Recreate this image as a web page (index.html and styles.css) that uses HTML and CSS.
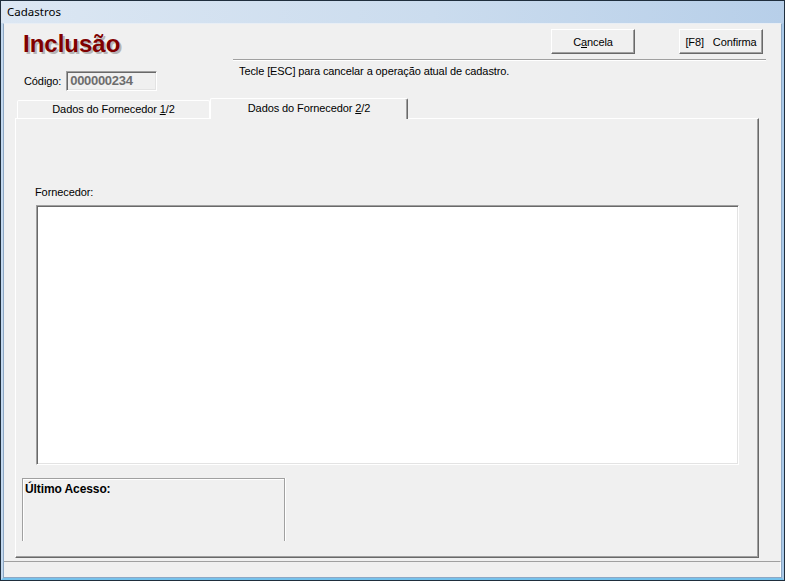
FILE: index.html
```html
<!DOCTYPE html>
<html lang="pt-BR">
<head>
<meta charset="utf-8">
<title>Cadastros</title>
<link rel="stylesheet" href="styles.css">
</head>
<body>
<div class="window">
  <div class="titlebar">Cadastros</div>
  <div class="frame">
    <div class="client">
      <div class="header">
        <div class="header-left">
          <div class="mode-title">Inclusão</div>
          <div class="code-row">
            <span class="label">Código:</span>
            <div class="code-input">000000234</div>
          </div>
        </div>
        <div class="header-right">
          <div class="buttons">
            <button class="btn">C<u>a</u>ncela</button>
            <button class="btn">[F8]   Confirma</button>
          </div>
          <div class="etched-line"></div>
          <div class="hint">Tecle [ESC] para cancelar a operação atual de cadastro.</div>
        </div>
      </div>
      <div class="tabs">
        <div class="tab tab-inactive">Dados do Fornecedor <u>1</u>/2</div>
        <div class="tab tab-active">Dados do Fornecedor <u>2</u>/2</div>
      </div>
      <div class="tab-panel">
        <div class="field-label">Fornecedor:</div>
        <div class="memo"></div>
        <div class="group">
          <div class="group-title">Último Acesso:</div>
        </div>
      </div>
      <div class="statusbar"></div>
    </div>
  </div>
</div>
</body>
</html>
```
FILE: styles.css
```css
* { box-sizing: border-box; }
html, body { margin: 0; padding: 0; background: #f0f0f0; }
body {
  font-family: "Liberation Sans", Arial, sans-serif;
  font-size: 11px;
  color: #000;
}
.window {
  width: 785px;
  height: 581px;
  border: 1px solid #1f2e3d;
  display: flex;
  flex-direction: column;
  background: #c9dcef;
}
.titlebar {
  height: 22px;
  line-height: 22px;
  padding-left: 6px;
  font-family: "Noto Sans", "Open Sans", sans-serif;
  font-size: 11.5px;
  color: #000;
  background: linear-gradient(to right, #dce7f3 0%, #cbdcee 55%, #b7cfe9 100%);
}
.frame {
  flex: 1;
  display: flex;
  border: 2px solid #c3d8ee;
  border-top: 0;
  border-right-color: #a9c9e8;
  border-bottom-color: #76c2ec;
}
.client {
  flex: 1;
  display: flex;
  flex-direction: column;
  background: #f0f0f0;
  border: 1px solid #8ea8c4;
  border-top-color: #e8eef5;
  letter-spacing: -0.1px;
}
.header {
  display: flex;
  height: 67px;
}
.header-left {
  width: 229px;
}
.mode-title {
  margin-top: 6px;
  margin-left: 19px;
  font-size: 24px;
  line-height: 28px;
  font-weight: bold;
  letter-spacing: 0;
  color: #800000;
  text-shadow: 2px 2px 0 #b5b5b5;
}
.code-row {
  margin-top: 13px;
  margin-left: 20px;
  display: flex;
  align-items: center;
  gap: 5px;
}
.code-input {
  width: 91px;
  height: 20px;
  border: 1px solid;
  border-color: #a0a0a0 #ffffff #ffffff #a0a0a0;
  box-shadow: inset 1px 1px 0 #696969, inset -1px -1px 0 #e3e3e3;
  padding-left: 3px;
  font-size: 13px;
  font-weight: bold;
  letter-spacing: -0.3px;
  line-height: 18px;
  color: #6d6d6d;
  background: #f0f0f0;
}
.header-right {
  flex: 1;
  padding-top: 5px;
}
.buttons {
  display: flex;
  justify-content: flex-end;
  gap: 44px;
  padding-right: 18px;
}
.btn {
  width: 84px;
  height: 25px;
  margin: 0;
  padding: 0;
  font-family: "Liberation Sans", Arial, sans-serif;
  font-size: 11px;
  letter-spacing: -0.1px;
  color: #000;
  background: #f0f0f0;
  border: 1px solid;
  border-color: #ffffff #696969 #696969 #ffffff;
  box-shadow: inset -1px -1px 0 #a0a0a0;
  white-space: pre;
}
.etched-line {
  margin-top: 5px;
  margin-right: 15px;
  height: 2px;
  border-top: 1px solid #a0a0a0;
  border-bottom: 1px solid #ffffff;
}
.hint {
  margin-top: 4px;
  padding-left: 6px;
  line-height: 13px;
}
.tabs {
  margin-top: 7px;
  margin-left: 11px;
  display: flex;
  align-items: flex-end;
  height: 21px;
  margin-bottom: -1px;
}
.tab {
  text-align: center;
  background: #f0f0f0;
  border-top: 1px solid #ffffff;
  border-left: 1px solid #ffffff;
  border-radius: 2px 2px 0 0;
}
.tab-inactive {
  margin-left: 2px;
  width: 193px;
  height: 18px;
  margin-bottom: 1px;
  border-right: 1px solid #ffffff;
  line-height: 15px;
  padding-top: 1px;
}
.tab-active {
  position: relative;
  z-index: 1;
  width: 198px;
  height: 21px;
  border-right: 1px solid #696969;
  box-shadow: inset -1px 0 0 #a0a0a0;
  line-height: 15px;
  padding-top: 2px;
}
.tab-panel {
  margin-left: 11px;
  width: 744px;
  height: 440px;
  border-top: 1px solid #ffffff;
  border-left: 1px solid #ffffff;
  border-right: 1px solid #696969;
  border-bottom: 1px solid #696969;
  box-shadow: inset -1px -1px 0 #a0a0a0;
  padding-top: 67px;
}
.field-label {
  padding-left: 19px;
  line-height: 13px;
}
.memo {
  margin-top: 6px;
  margin-left: 20px;
  width: 703px;
  height: 260px;
  background: #ffffff;
  border: 1px solid;
  border-color: #a0a0a0 #ffffff #ffffff #a0a0a0;
  box-shadow: inset 1px 1px 0 #696969, inset -1px -1px 0 #e3e3e3;
}
.group {
  margin-top: 13px;
  margin-left: 6px;
  width: 263px;
  height: 63px;
  border-top: 1px solid #a0a0a0;
  border-left: 1px solid #a0a0a0;
  border-right: 1px solid #a0a0a0;
  box-shadow: inset 1px 1px 0 #ffffff, 1px 0 0 #ffffff;
  padding: 3px 0 0 2px;
}
.group-title {
  font-size: 12px;
  font-weight: bold;
  line-height: 14px;
  letter-spacing: -0.1px;
}
.statusbar {
  margin-top: auto;
  height: 16px;
  border-top: 1px solid #a0a0a0;
  border-right: 1px solid #ffffff;
}
```
